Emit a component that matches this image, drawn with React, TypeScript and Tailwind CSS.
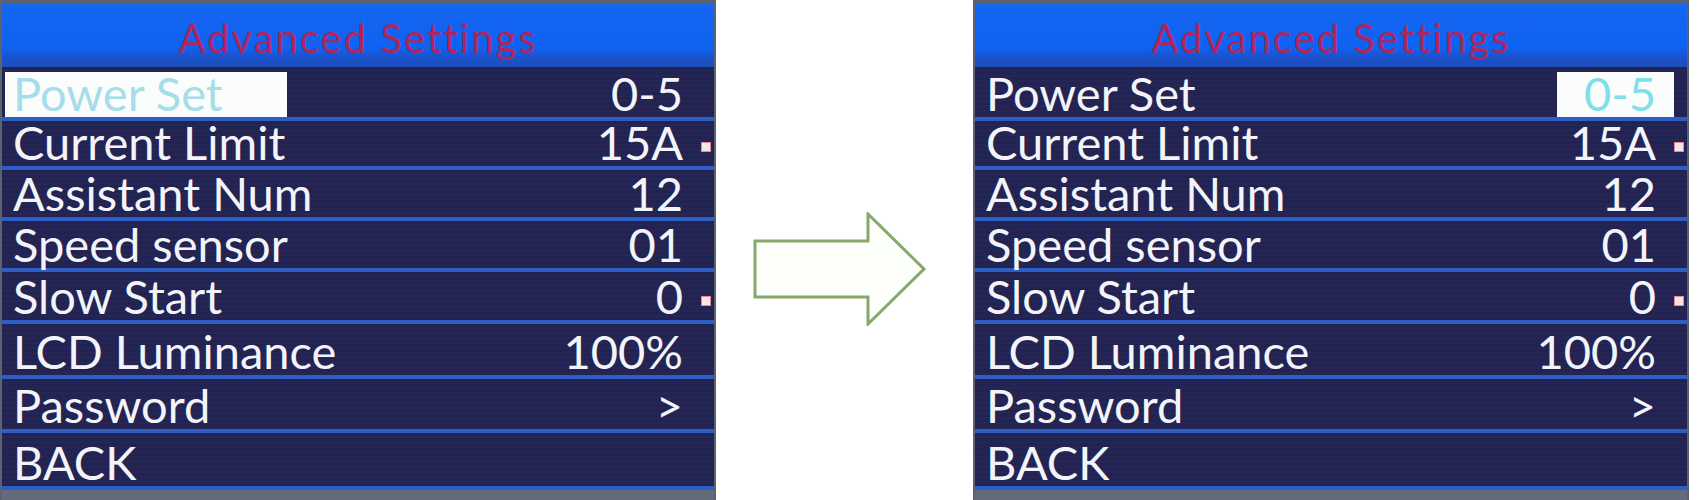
type Row = {
  label: string;
  value: string;
  h: string;
  marker?: boolean;
  pickLabel?: boolean;
  pickValue?: boolean;
};

// Row heights vary slightly on the device screen, so each row carries its own
const LEFT_ROWS: Row[] = [
  { label: 'Power Set', value: '0-5', h: 'h-[54px]', pickLabel: true },
  { label: 'Current Limit', value: '15A', h: 'h-[49px]', marker: true },
  { label: 'Assistant Num', value: '12', h: 'h-[51px]' },
  { label: 'Speed sensor', value: '01', h: 'h-[51px]' },
  { label: 'Slow Start', value: '0', h: 'h-[52px]', marker: true },
  { label: 'LCD Luminance', value: '100%', h: 'h-[55px]' },
  { label: 'Password', value: '>', h: 'h-[54px]' },
  { label: 'BACK', value: '', h: 'h-[57px]' },
];

const RIGHT_ROWS: Row[] = LEFT_ROWS.map((r) =>
  r.label === 'Power Set' ? { ...r, pickLabel: false, pickValue: true } : r
);

function MenuRow({ row }: { row: Row }) {
  return (
    <div
      className={`${row.h} flex items-end justify-between border-b-[4px] border-[#2d5ec4] bg-[repeating-linear-gradient(180deg,#1f2455_0px,#1f2455_3px,#2a2550_3px,#2a2550_5px)]`}
    >
      <div
        className={`h-[45px] flex items-end pb-[2px] ${
          row.pickLabel ? 'ml-[3px] w-[282px] bg-[#fbfdfd] text-[#a6dde9] pl-[8px]' : 'pl-[11px] text-[#f2f4fa]'
        }`}
      >
        <span className="leading-[43px]">{row.label}</span>
      </div>
      <div className="flex items-end">
        <div
          className={`h-[45px] w-[117px] flex items-end justify-end pr-[18px] pb-[2px] ${
            row.pickValue ? 'bg-[#fbfdfd] text-[#7fe0ec]' : 'text-[#f2f4fa]'
          }`}
        >
          <span className="leading-[43px]">{row.value}</span>
        </div>
        <div className="w-[13px] h-[45px] flex items-center justify-start pt-[6px]">
          {row.marker && <div className="w-[10px] h-[10px] bg-[#fbe4e6] border border-[#e3879b]" />}
        </div>
      </div>
    </div>
  );
}

function Panel({ rows, title }: { rows: Row[]; title: string }) {
  return (
    <div className="w-[716px] h-[500px] flex flex-col bg-[#646c7c] border-t-[3px] border-x-[2px] border-[#5b6272]">
      <div className="h-[64px] flex items-center justify-center pt-[6px] bg-[linear-gradient(180deg,#1566f0_0%,#0f62f0_70%,#1b52cc_85%,#1d4fb8_100%)]">
        <span className="text-[40px] leading-none tracking-[2px] text-[#ad2660] font-['Lato','Noto_Sans',sans-serif]">
          {title}
        </span>
      </div>
      <div className="text-[47px] font-['Lato','Noto_Sans',sans-serif]">
        {rows.map((r) => (
          <MenuRow key={r.label} row={r} />
        ))}
      </div>
    </div>
  );
}

export default function App() {
  return (
    <div className="w-[1698px] h-[500px] bg-white flex">
      <Panel rows={LEFT_ROWS} title="Advanced Settings" />

      {/* hollow arrow between the two screens */}
      <div className="w-[257px] pt-[212px] pl-[37px]">
        <svg width="174" height="114" viewBox="0 0 174 114" fill="none">
          <path
            d="M2 29 H115 V2 L171 57 L115 112 V85 H2 Z"
            stroke="#86a86a"
            strokeWidth="3"
            fill="#fdfffa"
            strokeLinejoin="miter"
          />
        </svg>
      </div>

      <Panel rows={RIGHT_ROWS} title="Advanced Settings" />
    </div>
  );
}
